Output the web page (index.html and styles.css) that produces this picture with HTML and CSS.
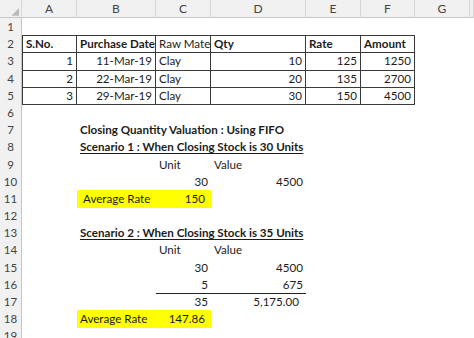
FILE: index.html
```html
<!DOCTYPE html>
<html>
<head>
<meta charset="utf-8">
<link rel="stylesheet" href="styles.css">
</head>
<body>
<div class="sheet">
  <div class="row head">
    <div class="corner"><svg width="22" height="18" viewBox="0 0 22 18"><polygon points="20,8 20,16 12,16" fill="#b9b9b9"/></svg></div>
    <div>A</div><div>B</div><div>C</div><div>D</div><div>E</div><div>F</div><div>G</div><div></div>
  </div>
  <div class="row"><div class="rh">1</div></div>
  <div class="row top">
    <div class="rh dark">2</div>
    <div class="cell box first b">S.No.</div>
    <div class="cell box b">Purchase Date</div>
    <div class="cell box clip">Raw Mate</div>
    <div class="cell box b">Qty</div>
    <div class="cell box b">Rate</div>
    <div class="cell box b">Amount</div>
  </div>
  <div class="row">
    <div class="rh dark">3</div>
    <div class="cell box first r">1</div>
    <div class="cell box r">11-Mar-19</div>
    <div class="cell box">Clay</div>
    <div class="cell box r">10</div>
    <div class="cell box r">125</div>
    <div class="cell box r">1250</div>
  </div>
  <div class="row">
    <div class="rh dark">4</div>
    <div class="cell box first r">2</div>
    <div class="cell box r">22-Mar-19</div>
    <div class="cell box">Clay</div>
    <div class="cell box r">20</div>
    <div class="cell box r">135</div>
    <div class="cell box r">2700</div>
  </div>
  <div class="row">
    <div class="rh dark">5</div>
    <div class="cell box first r">3</div>
    <div class="cell box r">29-Mar-19</div>
    <div class="cell box">Clay</div>
    <div class="cell box r">30</div>
    <div class="cell box r">150</div>
    <div class="cell box r">4500</div>
  </div>
  <div class="row"><div class="rh">6</div></div>
  <div class="row">
    <div class="rh">7</div><div class="cell"></div>
    <div class="cell b">Closing Quantity Valuation : Using FIFO</div>
  </div>
  <div class="row">
    <div class="rh">8</div><div class="cell"></div>
    <div class="cell b u">Scenario 1 : When Closing Stock is 30 Units</div>
  </div>
  <div class="row">
    <div class="rh">9</div><div class="cell"></div><div class="cell"></div>
    <div class="cell">Unit</div>
    <div class="cell">Value</div>
  </div>
  <div class="row">
    <div class="rh">10</div><div class="cell"></div><div class="cell"></div>
    <div class="cell r">30</div>
    <div class="cell r">4500</div>
  </div>
  <div class="row">
    <div class="rh">11</div><div class="cell"></div>
    <div class="cell hl ind">Average Rate</div>
    <div class="cell hl r ind">150</div>
  </div>
  <div class="row"><div class="rh">12</div></div>
  <div class="row">
    <div class="rh">13</div><div class="cell"></div>
    <div class="cell b u">Scenario 2 : When Closing Stock is 35 Units</div>
  </div>
  <div class="row">
    <div class="rh">14</div><div class="cell"></div><div class="cell"></div>
    <div class="cell">Unit</div>
    <div class="cell">Value</div>
  </div>
  <div class="row">
    <div class="rh">15</div><div class="cell"></div><div class="cell"></div>
    <div class="cell r">30</div>
    <div class="cell r">4500</div>
  </div>
  <div class="row">
    <div class="rh">16</div><div class="cell"></div><div class="cell"></div>
    <div class="cell r rule">5</div>
    <div class="cell r rule">675</div>
  </div>
  <div class="row">
    <div class="rh">17</div><div class="cell"></div><div class="cell"></div>
    <div class="cell r">35</div>
    <div class="cell r acc">5,175.00</div>
  </div>
  <div class="row">
    <div class="rh">18</div><div class="cell"></div>
    <div class="cell hl">Average Rate</div>
    <div class="cell hl r ind">147.86</div>
  </div>
  <div class="row"><div class="rh">19</div></div>
</div>
</body>
</html>
```
FILE: styles.css
```css
* {
  box-sizing: border-box;
  margin: 0;
  padding: 0;
}
html, body {
  width: 474px;
  height: 338px;
  overflow: hidden;
  background: #ffffff;
}
body {
  font-family: Lato, "Open Sans", sans-serif;
  font-size: 11.6px;
  color: #1c1c1c;
}
.sheet {
  display: flex;
  flex-direction: column;
  width: 474px;
  overflow: hidden;
}
.row {
  display: grid;
  grid-template-columns: 22px 55px 79px 55px 95px 55px 54px 55px 4px;
  height: 17.2px;
  line-height: 17.2px;
}
.head {
  height: 18px;
  line-height: 18px;
  background: #f1f1f1;
  border-bottom: 1px solid #c6c6c6;
  color: #444444;
  font-size: 12px;
}
.head > div {
  text-align: center;
  border-right: 1px solid #d6d6d6;
}
.corner {
  display: flex;
}
.rh {
  background: #f1f1f1;
  color: #444444;
  text-align: center;
  border-right: 1px solid #c6c6c6;
  border-bottom: 1px solid #dedede;
  font-size: 11.5px;
}
.cell {
  padding: 0 3px;
  white-space: nowrap;
}
.r { text-align: right; }
.b { font-weight: 700; }
.u {
  text-decoration: underline;
  text-underline-offset: 2px;
}
.box {
  border-right: 1px solid #3a3a3a;
  border-bottom: 1px solid #3a3a3a;
}
.box.first { border-left: 1px solid #3a3a3a; }
.top .box { border-top: 1px solid #3a3a3a; line-height: 15.2px; }
.clip { overflow: hidden; }
.hl { background: #ffff00; }
.ind { padding: 0 6px; }
.rule { border-bottom: 1px solid #222222; }
.acc { padding-right: 7px; }
```
